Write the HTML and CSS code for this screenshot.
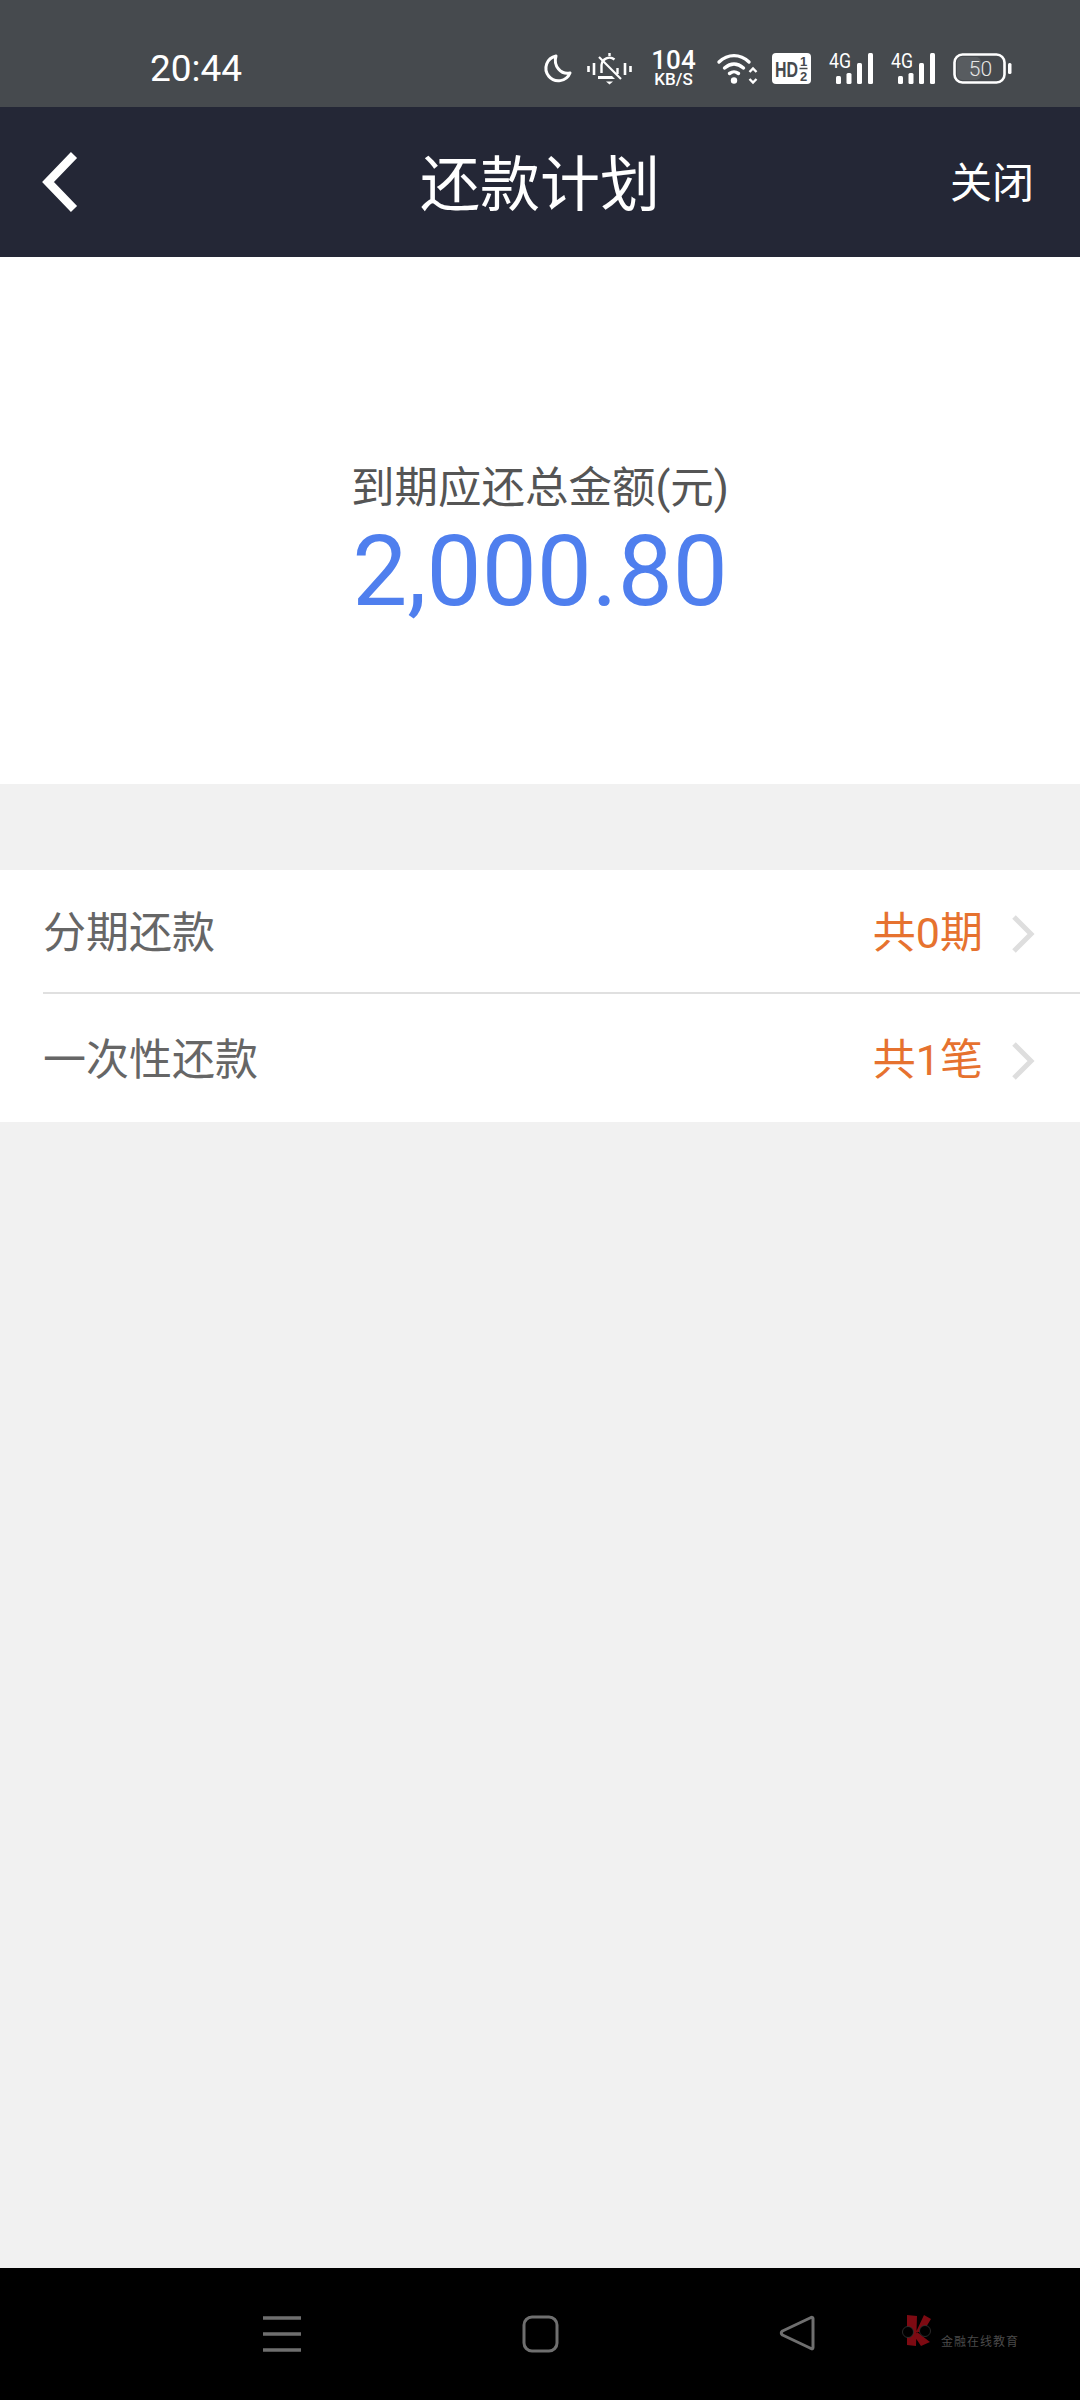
FILE: index.html
```html
<!DOCTYPE html>
<html lang="zh-CN">
<head>
    <meta charset="UTF-8">
    <meta name="viewport" content="width=device-width, initial-scale=1.0">
    <title>还款计划</title>
    <link rel="stylesheet" href="styles.css">
</head>
<body>
    <div class="status-bar">
        <span class="time">20:44</span>
        <div class="status-icons">
            <svg class="icon-moon" width="27" height="28" viewBox="0 0 27 28"><path d="M11 2A12.500 12.500 0 1 0 25 19C16 21 8 12 11 2Z" fill="none" stroke="#fff" stroke-width="3" stroke-linejoin="round"/></svg>
            <svg class="icon-bell" width="45" height="33" viewBox="0 0 45 33">
                <path d="M1.500 14v6M7 11v12M38 11v12M43.500 14v6" stroke="#fff" stroke-width="2.600" fill="none"/>
                <path d="M22.500 1v3M14.500 21v-8a8 8 0 0 1 13-5.500M30.500 16v6" stroke="#fff" stroke-width="2.400" fill="none"/>
                <path d="M12 5l22 22" stroke="#fff" stroke-width="2.200"/>
                <path d="M11 24h14l3 3H11z" fill="#fff"/>
                <path d="M19 29.500h7l-3.500 3z" fill="#fff"/>
            </svg>
            <div class="net-speed"><b>104</b><span>KB/S</span></div>
            <svg class="icon-wifi" width="40" height="31" viewBox="0 0 40 31">
                <path d="M2 9C11 .5 23 .5 32 9M7.500 15C14 9.500 20 9.500 26.500 15M12.500 20.500c3.500-2.500 5.500-2.500 9 0" fill="none" stroke="#fff" stroke-width="3.400" stroke-linecap="round"/>
                <circle cx="17" cy="27.500" r="3.200" fill="#fff"/>
                <path d="M32.500 19l3.500-3.500 3.500 3.500M32.500 26l3.500 3.500 3.500-3.500" fill="none" stroke="#fff" stroke-width="2.400"/>
            </svg>
            <svg class="icon-hd" width="39" height="31" viewBox="0 0 39 31">
                <rect width="39" height="31" rx="4" fill="#fff"/>
                <text x="3" y="23.500" class="hd-text" textLength="23" lengthAdjust="spacingAndGlyphs">HD</text>
                <text x="31.500" y="13" class="hd-frac">1</text>
                <text x="31.500" y="27.500" class="hd-frac">2</text>
                <path d="M27.500 15.500h8" stroke="#464a4e" stroke-width="1.500"/>
            </svg>
            <svg class="icon-signal" width="44" height="31" viewBox="0 0 44 31">
                <text x="0" y="15" class="sig-text" textLength="22" lengthAdjust="spacingAndGlyphs">4G</text>
                <rect x="7" y="23" width="5" height="8" rx="1.500" fill="#fff"/>
                <rect x="17.500" y="20" width="5" height="11" rx="1.500" fill="#fff"/>
                <rect x="28" y="10" width="5" height="21" rx="1.500" fill="#fff"/>
                <rect x="39" y="0" width="5" height="31" rx="1.500" fill="#fff"/>
            </svg>
            <svg class="icon-signal" width="44" height="31" viewBox="0 0 44 31">
                <text x="0" y="15" class="sig-text" textLength="22" lengthAdjust="spacingAndGlyphs">4G</text>
                <rect x="7" y="23" width="5" height="8" rx="1.500" fill="#fff"/>
                <rect x="17.500" y="20" width="5" height="11" rx="1.500" fill="#fff"/>
                <rect x="28" y="10" width="5" height="21" rx="1.500" fill="#fff"/>
                <rect x="39" y="0" width="5" height="31" rx="1.500" fill="#fff"/>
            </svg>
            <svg class="icon-battery" width="59" height="31" viewBox="0 0 59 31">
                <rect x="1.500" y="1.500" width="50" height="28" rx="8" fill="none" stroke="#fff" stroke-width="2.600"/>
                <rect x="4" y="4" width="24" height="23" rx="5" fill="#fff" fill-opacity=".1"/>
                <rect x="55" y="10" width="3.500" height="11" rx="1.500" fill="#fff"/>
                <text x="27.500" y="22.500" class="bat-text">50</text>
            </svg>
        </div>
    </div>

    <header class="nav-bar">
        <svg class="back" width="36" height="60" viewBox="0 0 36 60"><path d="M32 3L6 30l26 27" fill="none" stroke="#fff" stroke-width="8.500"/></svg>
        <h1 class="title">还款计划</h1>
        <span class="close">关闭</span>
    </header>

    <section class="summary">
        <p class="summary-label">到期应还总金额(元)</p>
        <p class="summary-amount">2,000.80</p>
    </section>

    <ul class="plan-list">
        <li class="plan-item">
            <span class="plan-name">分期还款</span>
            <span class="plan-count">共0期</span>
            <svg class="chevron" width="22" height="38" viewBox="0 0 22 38"><path d="M2 2l17 17L2 36" fill="none" stroke="#dedede" stroke-width="5"/></svg>
        </li>
        <li class="plan-item">
            <span class="plan-name">一次性还款</span>
            <span class="plan-count">共1笔</span>
            <svg class="chevron" width="22" height="38" viewBox="0 0 22 38"><path d="M2 2l17 17L2 36" fill="none" stroke="#dedede" stroke-width="5"/></svg>
        </li>
    </ul>

    <main class="filler"></main>

    <footer class="sys-nav">
        <svg class="sys-menu" width="38" height="38" viewBox="0 0 38 38"><path d="M0 3h38M0 19h38M0 35h38" stroke="#6f6f6f" stroke-width="3.500"/></svg>
        <svg class="sys-home" width="37" height="38" viewBox="0 0 37 38"><rect x="2" y="2" width="33" height="34" rx="8" fill="none" stroke="#6f6f6f" stroke-width="3"/></svg>
        <svg class="sys-back" width="37" height="36" viewBox="0 0 37 36"><path d="M34 3.500V32.500Q34 35 31 33L3.500 20Q1 18 3.500 16L31 3Q34 1.500 34 3.500Z" fill="none" stroke="#6f6f6f" stroke-width="3" stroke-linejoin="round"/></svg>
        <div class="watermark">
            <svg width="34" height="36" viewBox="-4 -2 34 36">
                <path d="M2 0l10 1-1 30-9-1zM19 0l7 4-8 13h-7zM12 17l13 10-9 4-6-9z" fill="#7d0a12"/>
                <circle cx="3" cy="17" r="5.500" fill="#000" stroke="#333" stroke-width=".8"/>
                <circle cx="20" cy="16" r="5.500" fill="#000" stroke="#333" stroke-width=".8"/>
            </svg>
            <span>金融在线教育</span>
        </div>
    </footer>
</body>
</html>
```

FILE: styles.css
```css
* {
    margin: 0;
    padding: 0;
    box-sizing: border-box;
}

body {
    width: 1080px;
    height: 2400px;
    display: flex;
    flex-direction: column;
    font-family: Roboto, "Noto Sans CJK SC", sans-serif;
    background-color: #f1f1f1;
}

svg {
    overflow: visible;
}

.status-bar {
    height: 107px;
    display: flex;
    align-items: center;
    justify-content: space-between;
    padding: 29px 68px 0 150px;
    background-color: #464a4e;
    color: #fff;
}

.time {
    font-size: 37px;
    line-height: 37px;
}

.status-icons {
    display: flex;
    align-items: center;
    gap: 18px;
}

.icon-moon {
    margin-right: -3px;
}

.icon-bell {
    margin-right: 3px;
}

.net-speed {
    width: 41px;
    margin-right: 5px;
    display: flex;
    flex-direction: column;
    align-items: center;
    gap: 1px;
    font-weight: 500;
}

.net-speed b {
    font-size: 26px;
    line-height: 21px;
    font-weight: 500;
}

.net-speed span {
    font-size: 17px;
    line-height: 15px;
    white-space: nowrap;
}

.icon-wifi {
    margin-right: -3px;
}

.hd-text {
    font: 700 22px "Liberation Sans", sans-serif;
    fill: #464a4e;
}

.hd-frac {
    font: 700 13px "Liberation Sans", sans-serif;
    fill: #464a4e;
    text-anchor: middle;
}

.sig-text {
    font: 400 20px Roboto, sans-serif;
    fill: #fff;
}

.bat-text {
    font: 300 21px Roboto, sans-serif;
    fill: #e6e6e6;
    text-anchor: middle;
}

.nav-bar {
    height: 150px;
    position: relative;
    display: flex;
    align-items: center;
    justify-content: space-between;
    padding: 0 46px 0 42px;
    background-color: #242736;
    color: #fff;
}

.title {
    position: absolute;
    left: 0;
    right: 0;
    padding-bottom: 6px;
    text-align: center;
    font-size: 60px;
    font-weight: 400;
    pointer-events: none;
}

.close {
    padding-bottom: 5px;
    font-size: 42px;
}

.summary {
    height: 527px;
    padding-top: 204px;
    background-color: #fff;
    text-align: center;
}

.summary-label {
    font-size: 43.5px;
    line-height: 56px;
    color: #555;
}

.summary-amount {
    font-size: 98px;
    line-height: 110px;
    color: #4f7fee;
}

.plan-list {
    margin-top: 86px;
    list-style: none;
    background-color: #fff;
    padding-left: 43px;
}

.plan-item {
    height: 128px;
    display: flex;
    align-items: center;
    padding: 0 46px 5px 0;
}

.plan-item:first-child {
    height: 124px;
    border-bottom: 2px solid #e0e0e0;
}

.plan-name {
    flex: 1;
    font-size: 43px;
    color: #666;
}

.plan-count {
    margin-right: 29px;
    font-size: 43px;
    color: #e6722f;
}

.chevron {
    margin-top: 11px;
}

.filler {
    flex: 1;
}

.sys-nav {
    height: 132px;
    position: relative;
    display: flex;
    align-items: flex-start;
    padding: 47px 0 0 263px;
    background-color: #000;
}

.sys-home {
    margin-left: 221px;
}

.sys-back {
    margin-left: 220px;
}

.watermark {
    position: absolute;
    left: 901px;
    top: 45px;
    display: flex;
    align-items: flex-end;
    gap: 6px;
    color: #4a4a4a;
    font-size: 12px;
    letter-spacing: 1px;
    white-space: nowrap;
}
```
